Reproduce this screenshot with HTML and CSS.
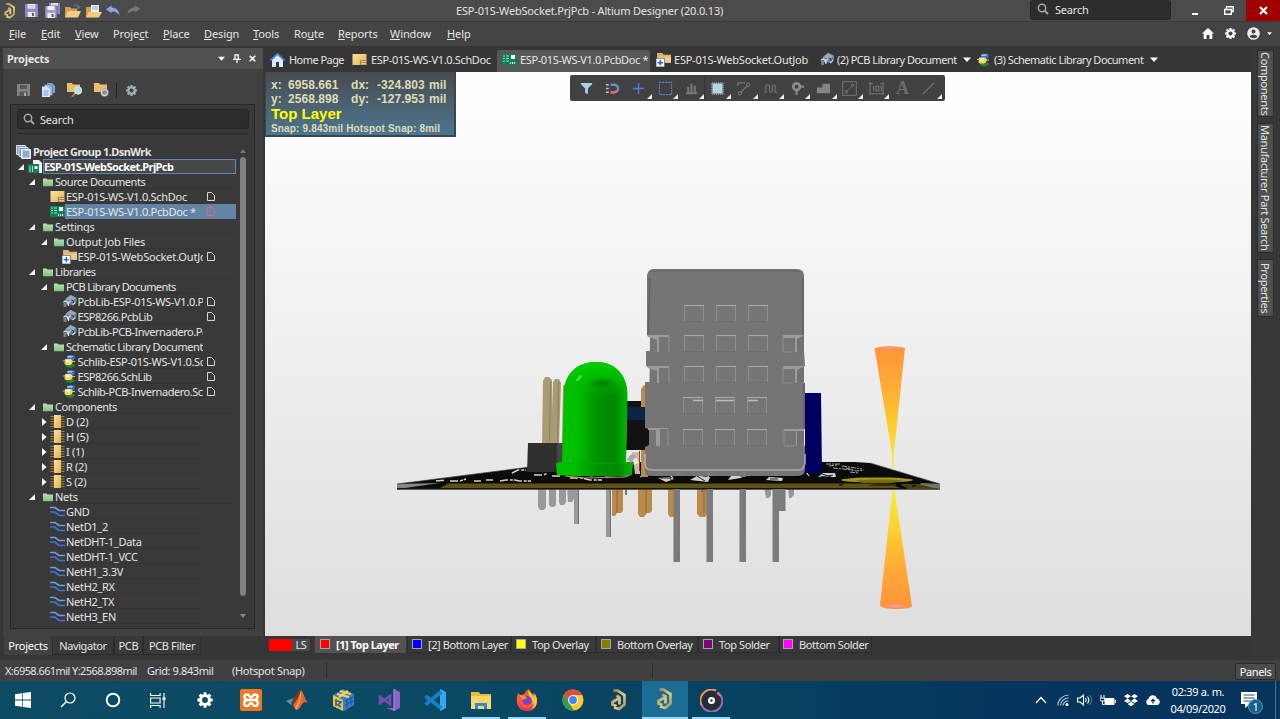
FILE: index.html
```
<!DOCTYPE html>
<html lang="en">
<head>
<meta charset="utf-8">
<title>ESP-01S-WebSocket.PrjPcb - Altium Designer (20.0.13)</title>
<link rel="stylesheet" href="styles.css">
</head>
<body>
<svg class="sprite" aria-hidden="true">
  <defs>
    <linearGradient id="gFolder" x1="0" y1="0" x2="0" y2="1"><stop offset="0" stop-color="#b9e3b4"/><stop offset="1" stop-color="#82c17f"/></linearGradient>
    <linearGradient id="gGold" x1="0" y1="0" x2="1" y2="1"><stop offset="0" stop-color="#fbe3a3"/><stop offset="1" stop-color="#e2ae55"/></linearGradient>
    <linearGradient id="gAlt" x1="0" y1="0" x2="1" y2="1"><stop offset="0" stop-color="#a88a48"/><stop offset=".6" stop-color="#e0cc8c"/><stop offset="1" stop-color="#a58b4c"/></linearGradient>
  </defs>
  <symbol id="altium" viewBox="0 0 16 22"><path d="M2.500 1.500h4l7 4.500v9.500L8 20l-5-1.500M8.500 15.500V8.500L5.500 6.500M1.500 13l6-3.500M1.500 12v3.500l4 1.500" fill="none" stroke="url(#gAlt)" stroke-width="2.700"/></symbol>
  <symbol id="save" viewBox="0 0 14 14"><path d="M0 0h14v14H0z" fill="currentColor"/><path d="M3 0h8v5H3z" fill="#f4f4fb"/><path d="M4 1.500h6M4 3.300h6" stroke="#aaa" stroke-width=".8"/><path d="M3 8.500h8V14H3z" fill="#e9e9f4"/><path d="M7.500 9.500h2V13h-2z" fill="#555"/></symbol>
  <symbol id="saveall" viewBox="0 0 15 15"><path d="M4 0h11v11H4z" fill="#8f87c8"/><path d="M6 0h7v3H6z" fill="#ddd"/><path d="M0 3h12v12H0z" fill="#a29bd5" stroke="#4b4b4b" stroke-width=".6"/><path d="M2.500 3h7v4h-7zM2.500 10h7v5h-7z" fill="#f1f1f9"/><path d="M6.500 11h2v3h-2z" fill="#555"/></symbol>
  <symbol id="open" viewBox="0 0 16 14"><path d="M0 3h5l1.500 1.500H12V13H0z" fill="#d49f50"/><path d="M3 7h13l-3 6.500H0z" fill="#f4cd83"/><path d="M9 2c2-2 4-1 4 1l1.500 0-2.500 2.500" fill="none" stroke="#4a7fa0" stroke-width="1.300"/></symbol>
  <symbol id="opendoc" viewBox="0 0 16 14"><path d="M0 3h5l1 1.500h7V13H0z" fill="#d49f50"/><path d="M5 1h8v8H5z" fill="#e8f0fb"/><path d="M6 3h6M6 5h6" stroke="#7fa1cf" stroke-width=".8"/><path d="M3 8h13l-3 5.500H0z" fill="#f4cd83"/></symbol>
  <symbol id="undo" viewBox="0 0 15 12"><path d="M0 4l6-4v2.600c5 0 8 2.500 8.500 8.400-2-3.500-4.500-4.500-8.500-4.500V8.500z" fill="currentColor"/></symbol>
  <symbol id="arrow-open" viewBox="0 0 6 6"><path d="M6 0v6H0z" fill="#f4f4f4"/></symbol>
  <symbol id="arrow-shut" viewBox="0 0 6 8"><path d="M1 0l4.500 4L1 8z" fill="#fff"/></symbol>
  <symbol id="folder" viewBox="0 0 14 12"><path d="M0 1h5l1 1.500h8V12H0z" fill="url(#gFolder)"/></symbol>
  <symbol id="sch" viewBox="0 0 14 11"><path d="M0 0h14v11H0z" fill="url(#gGold)"/><path d="M8 6.500h6V11H8zM8 8.500h6" fill="#e9c987" stroke="#8f7442" stroke-width=".8"/></symbol>
  <symbol id="pcb" viewBox="0 0 15 11"><path d="M0 0h15v11H0z" fill="#0e8154"/><path d="M1 2h2M1 4.500h2M1 7h2M4 2h3M4 4.500h3M4 7h3" stroke="#9ce0c2" stroke-width="1"/><path d="M9 1h4v4H9z" fill="#fff"/><path d="M8 9h6" stroke="#fff" stroke-width="2" stroke-dasharray="1 1"/></symbol>
  <symbol id="prj" viewBox="0 0 15 14"><path d="M5 0h6l3 3v10H5z" fill="#f2f6f2"/><path d="M0 4h11v9H0z" fill="#0e8154"/><path d="M2 6v6M4.500 6v6" stroke="#9ce0c2" stroke-width="1"/><path d="M6.500 6h3v3h-3z" fill="#fff"/></symbol>
  <symbol id="group" viewBox="0 0 15 14"><path d="M.5.500h9v9h-9z" fill="#7d9fcf" stroke="#dbe7f8"/><path d="M3 2.500h9v9H3z" fill="#6f93ca" stroke="#dbe7f8"/><path d="M5.500 4.500h9v9h-9z" fill="#bcd0ee" stroke="#f4f8ff"/><path d="M7 7h6M7 9h6M7 11h6" stroke="#5b7fb5" stroke-width=".9"/></symbol>
  <symbol id="outjob" viewBox="0 0 14 13"><path d="M1 0h5l1 1.500h7V9H1z" fill="#e6b36b"/><path d="M2 3.500h12V9H2z" fill="#f5cb8c"/><path d="M0 5h8v8H0z" fill="#fff" stroke="#2d63b8" stroke-width=".7"/><path d="M4 6.500v5M1.500 9h5" stroke="#2561c8" stroke-width="1.300"/></symbol>
  <symbol id="pcblib" viewBox="0 0 14 13"><path d="M3 4l5-4 6 3v4l-5 3-6-2z" fill="#6d8299"/><path d="M3 4l5-4 6 3-5 3z" fill="#93a9be"/><path d="M1 7.500c2-3 5-1 4 2M6 11V7.500L8 6M10 10l3-2.500" fill="none" stroke="#d7dee4" stroke-width="1.300"/><path d="M1 8h3v4H1z" fill="#79848e"/><path d="M9 5l2 1v2" fill="none" stroke="#2f3d4a"/></symbol>
  <symbol id="schlib" viewBox="0 0 13 13"><path d="M4 1q4-2 8 0l-1 4H4z" fill="#2f74d0"/><path d="M5 1h5l-1 1.500H4z" fill="#a4cbf7"/><path d="M3 9h8l1 2-4 2-5-1z" fill="#268330"/><path d="M2 4h6l2 2-1 3-2 1H3L1.500 9z" fill="#f6d46c"/><path d="M3 5h4v2H3z" fill="#fff2bd"/><path d="M0 6h2M9 6.500h3" stroke="#e5c052"/></symbol>
  <symbol id="chip" viewBox="0 0 14 13"><path d="M0 1.500h14M0 4h14M0 6.500h14M0 9h14M0 11.500h14" stroke="#9b8434" stroke-width="1"/><path d="M3.500 0h7v13h-7z" fill="url(#gGold)"/></symbol>
  <symbol id="net" viewBox="0 0 15 11"><path d="M0 1.500h5l4 3h6" fill="none" stroke="#6f9be4" stroke-width="1.700"/><path d="M0 6h5l4 3.500h6" fill="none" stroke="#3f73dc" stroke-width="1.700"/></symbol>
  <symbol id="doc" viewBox="0 0 8 9"><path d="M.5.500h4l3 3v5h-7z" fill="none" stroke="currentColor"/></symbol>
  <symbol id="gear" viewBox="0 0 16 16"><path d="M8 1.200v13.600M1.200 8h13.600M3.200 3.200l9.600 9.600M12.800 3.200l-9.600 9.600" stroke="currentColor" stroke-width="2.600"/><circle cx="8" cy="8" r="4" fill="none" stroke="currentColor" stroke-width="2.600"/><circle cx="8" cy="8" r="2.600" fill="var(--hole,#404040)"/></symbol>
  <symbol id="lens" viewBox="0 0 12 12"><circle cx="5" cy="5" r="3.700" fill="none" stroke="currentColor" stroke-width="1.500"/><path d="M7.800 7.800L11 11" stroke="currentColor" stroke-width="2"/></symbol>
  <symbol id="caret" viewBox="0 0 8 5"><path d="M0 .500h8L4 5z" fill="#fff"/></symbol>
</svg>

<header class="titlebar">
  <div class="quick">
    <svg class="q-alt"><use href="#altium"/></svg>
    <svg class="q-save"><use href="#save"/></svg>
    <svg class="q-all"><use href="#saveall"/></svg>
    <svg class="q-open"><use href="#open"/></svg>
    <svg class="q-open"><use href="#opendoc"/></svg>
    <svg class="q-undo"><use href="#undo"/></svg>
    <svg class="q-redo"><use href="#undo"/></svg>
  </div>
  <div class="title">ESP-01S-WebSocket.PrjPcb - Altium Designer (20.0.13)</div>
  <div class="win-tools">
    <div class="top-search"><svg class="lens"><use href="#lens"/></svg><span>Search</span></div>
    <div class="win-btn"><svg width="8" height="10" viewBox="0 0 8 10"><path d="M1 8h6" stroke="#fff" stroke-width="2"/></svg></div>
    <div class="win-btn"><svg width="10" height="9" viewBox="0 0 10 9"><path d="M2.500 3V.8h6.700v4.700H7.500M.7 3.500h6.600v4.800H.7z" fill="none" stroke="#fff" stroke-width="1.400"/></svg></div>
    <div class="win-btn close"><svg width="9" height="9" viewBox="0 0 9 9"><path d="M1 1l7 7M8 1L1 8" stroke="#fff" stroke-width="2.200"/></svg></div>
  </div>
</header>

<nav class="menubar">
  <span class="m1"><u>F</u>ile</span><span class="m2"><u>E</u>dit</span><span class="m3"><u>V</u>iew</span><span class="m4">Proje<u>c</u>t</span><span class="m5"><u>P</u>lace</span><span class="m6"><u>D</u>esign</span><span class="m7"><u>T</u>ools</span><span class="m8">Ro<u>u</u>te</span><span class="m9"><u>R</u>eports</span><span class="m10"><u>W</u>indow</span><span><u>H</u>elp</span>
  <div class="menu-icons">
    <svg width="12" height="11" viewBox="0 0 12 11"><path d="M6 0l6 5.500h-1.700V11H7.500V7h-3v4H1.700V5.500H0z" fill="#fff"/></svg>
    <svg class="g12"><use href="#gear"/></svg>
    <svg width="13" height="13" viewBox="0 0 13 13"><circle cx="6.500" cy="6.500" r="6.300" fill="#eee"/><circle cx="6.500" cy="4.500" r="2" fill="#444"/><path d="M2.500 9.500c1.500-2.500 6.500-2.500 8 0-2 2.300-6 2.300-8 0z" fill="#444"/></svg>
    <svg class="tiny"><use href="#caret"/></svg>
  </div>
</nav>

<div class="workspace">
  <aside class="side">
    <div class="panel">
      <div class="panel-head"><b>Projects</b>
        <svg class="ph-caret"><use href="#caret"/></svg>
        <svg width="8" height="9" viewBox="0 0 8 9"><path d="M1.500.8h4.500M2 .5v4.500M5.200.5v4.500M0 5.300h8M4 5.500V9" stroke="#fff" stroke-width="1.300" fill="none"/></svg>
        <svg width="7" height="7" viewBox="0 0 7 7"><path d="M.7.700l5.600 5.600M6.300.700L.7 6.300" stroke="#fff" stroke-width="1.600"/></svg>
      </div>
      <div class="panel-tools">
        <svg class="t-save" width="13" height="12" viewBox="0 0 13 12"><path d="M0 0h13v12H0z" fill="#858585"/><path d="M3 1h7v4H3zM2.500 7.500h8V12h-8z" fill="#575757"/><path d="M7 8.500h2V12H7z" fill="#aaa"/></svg>
        <svg class="t-docs" width="13" height="14" viewBox="0 0 13 14"><path d="M5 0h5l3 3v7H5z" fill="#7ea4d5"/><path d="M2.500 1.500h5l3 3v8h-8z" fill="#9cbce5" stroke="#40618d" stroke-width=".6"/><path d="M0 3.500h5l3 3V14H0z" fill="#d6e6fa"/><path d="M1.500 8h5M1.500 10h5M1.500 12h5" stroke="#6d93c5" stroke-width=".8"/></svg>
        <svg class="t-fold" width="15" height="14" viewBox="0 0 15 14"><path d="M0 0h5l1 1.500h7V9H0z" fill="#ecbd6c"/><path d="M9 9l-4 5" stroke="#a58752" stroke-width="1.800"/><circle cx="11" cy="7.500" r="3.700" fill="#b9dbea" stroke="#dce8ec"/></svg>
        <svg class="t-fold2" width="15" height="14" viewBox="0 0 15 14"><path d="M0 0h5l1 1.500h7V9H0z" fill="#ecbd6c"/><circle cx="10.500" cy="9.500" r="4.200" fill="#8b8b8b"/><circle cx="10.500" cy="9.500" r="3" fill="none" stroke="#d0d0d0" stroke-width="1.300"/></svg>
        <i></i>
        <svg class="t-gear"><use href="#gear"/></svg>
      </div>
      <div class="tree-box">
        <div class="tree-search"><svg class="lens"><use href="#lens"/></svg><span>Search</span></div>
        <div class="tree-wrap">
          <div class="tree">
            <div class="row l0 bold"><svg class="ic"><use href="#group"/></svg><span>Project Group 1.DsnWrk</span></div>
            <div class="row l1 bold current"><svg class="ar"><use href="#arrow-open"/></svg><svg class="ic"><use href="#prj"/></svg><span>ESP-01S-WebSocket.PrjPcb</span></div>
            <div class="row l2 tight"><svg class="ar"><use href="#arrow-open"/></svg><svg class="ic f"><use href="#folder"/></svg><span>Source Documents</span></div>
            <div class="row l3"><svg class="ar"></svg><svg class="ic s"><use href="#sch"/></svg><span>ESP-01S-WS-V1.0.SchDoc</span><svg class="dc"><use href="#doc"/></svg></div>
            <div class="row l3 selected"><svg class="ar"></svg><svg class="ic s"><use href="#pcb"/></svg><span>ESP-01S-WS-V1.0.PcbDoc *</span><svg class="dc"><use href="#doc"/></svg></div>
            <div class="row l2"><svg class="ar"><use href="#arrow-open"/></svg><svg class="ic f"><use href="#folder"/></svg><span>Settings</span></div>
            <div class="row l3 loose"><svg class="ar"><use href="#arrow-open"/></svg><svg class="ic f"><use href="#folder"/></svg><span>Output Job Files</span></div>
            <div class="row l4 loose"><svg class="ar"></svg><svg class="ic"><use href="#outjob"/></svg><span>ESP-01S-WebSocket.OutJob</span><svg class="dc"><use href="#doc"/></svg></div>
            <div class="row l2 tight"><svg class="ar"><use href="#arrow-open"/></svg><svg class="ic f"><use href="#folder"/></svg><span>Libraries</span></div>
            <div class="row l3 tighter"><svg class="ar"><use href="#arrow-open"/></svg><svg class="ic f"><use href="#folder"/></svg><span>PCB Library Documents</span></div>
            <div class="row l4"><svg class="ar"></svg><svg class="ic n"><use href="#pcblib"/></svg><span>PcbLib-ESP-01S-WS-V1.0.PcbLib</span><svg class="dc"><use href="#doc"/></svg></div>
            <div class="row l4 tight"><svg class="ar"></svg><svg class="ic n"><use href="#pcblib"/></svg><span>ESP8266.PcbLib</span><svg class="dc"><use href="#doc"/></svg></div>
            <div class="row l4 tight"><svg class="ar"></svg><svg class="ic n"><use href="#pcblib"/></svg><span>PcbLib-PCB-Invernadero.PcbLib</span></div>
            <div class="row l3 tight"><svg class="ar"><use href="#arrow-open"/></svg><svg class="ic f"><use href="#folder"/></svg><span>Schematic Library Document</span></div>
            <div class="row l4"><svg class="ar"></svg><svg class="ic n"><use href="#schlib"/></svg><span>Schlib-ESP-01S-WS-V1.0.SchLib</span><svg class="dc"><use href="#doc"/></svg></div>
            <div class="row l4 tight"><svg class="ar"></svg><svg class="ic n"><use href="#schlib"/></svg><span>ESP8266.SchLib</span><svg class="dc"><use href="#doc"/></svg></div>
            <div class="row l4 tight"><svg class="ar"></svg><svg class="ic n"><use href="#schlib"/></svg><span>Schlib-PCB-Invernadero.SchLib</span><svg class="dc"><use href="#doc"/></svg></div>
            <div class="row l2 tight"><svg class="ar"><use href="#arrow-open"/></svg><svg class="ic f"><use href="#folder"/></svg><span>Components</span></div>
            <div class="row l3"><svg class="ar sh"><use href="#arrow-shut"/></svg><svg class="ic n"><use href="#chip"/></svg><span>D (2)</span></div>
            <div class="row l3"><svg class="ar sh"><use href="#arrow-shut"/></svg><svg class="ic n"><use href="#chip"/></svg><span>H (5)</span></div>
            <div class="row l3"><svg class="ar sh"><use href="#arrow-shut"/></svg><svg class="ic n"><use href="#chip"/></svg><span>I (1)</span></div>
            <div class="row l3"><svg class="ar sh"><use href="#arrow-shut"/></svg><svg class="ic n"><use href="#chip"/></svg><span>R (2)</span></div>
            <div class="row l3"><svg class="ar sh"><use href="#arrow-shut"/></svg><svg class="ic n"><use href="#chip"/></svg><span>S (2)</span></div>
            <div class="row l2"><svg class="ar"><use href="#arrow-open"/></svg><svg class="ic f"><use href="#folder"/></svg><span>Nets</span></div>
            <div class="row l3"><svg class="ar"></svg><svg class="ic s"><use href="#net"/></svg><span>GND</span></div>
            <div class="row l3"><svg class="ar"></svg><svg class="ic s"><use href="#net"/></svg><span>NetD1_2</span></div>
            <div class="row l3"><svg class="ar"></svg><svg class="ic s"><use href="#net"/></svg><span>NetDHT-1_Data</span></div>
            <div class="row l3"><svg class="ar"></svg><svg class="ic s"><use href="#net"/></svg><span>NetDHT-1_VCC</span></div>
            <div class="row l3"><svg class="ar"></svg><svg class="ic s"><use href="#net"/></svg><span>NetH1_3.3V</span></div>
            <div class="row l3"><svg class="ar"></svg><svg class="ic s"><use href="#net"/></svg><span>NetH2_RX</span></div>
            <div class="row l3"><svg class="ar"></svg><svg class="ic s"><use href="#net"/></svg><span>NetH2_TX</span></div>
            <div class="row l3"><svg class="ar"></svg><svg class="ic s"><use href="#net"/></svg><span>NetH3_EN</span></div>
          </div>
          <div class="scroll"><svg width="6" height="4" viewBox="0 0 6 4"><path d="M3 0l3 4H0z" fill="#777"/></svg><div class="thumb"></div><svg width="6" height="4" viewBox="0 0 6 4"><path d="M0 0h6L3 4z" fill="#888"/></svg></div>
        </div>
      </div>
    </div>
    <div class="panel-tabs"><span class="on pt1">Projects</span><span class="pt2">Navigator</span><span class="pt3">PCB</span><span class="pt4">PCB Filter</span></div>
  </aside>

  <main class="editor">
    <div class="doc-tabs">
      <div class="dt d1"><svg width="15" height="14" viewBox="0 0 15 14"><path d="M7.500 0L15 7h-2v7H9V9H6v5H2V7H0z" fill="#6fb1f5"/><path d="M7.500 2L13 7.300V14H9V9H6v5H2V7.300z" fill="#d8ecff"/><path d="M7.500 0L15 7l-1 1-6.500-6L1 8 0 7z" fill="#3f86dc"/></svg><span>Home Page</span></div>
      <div class="dt d2"><svg width="15" height="11"><use href="#sch"/></svg><span>ESP-01S-WS-V1.0.SchDoc</span></div>
      <div class="dt d3 on"><svg width="15" height="11"><use href="#pcb"/></svg><span>ESP-01S-WS-V1.0.PcbDoc *</span></div>
      <div class="dt d4"><svg width="15" height="14"><use href="#outjob"/></svg><span>ESP-01S-WebSocket.OutJob</span></div>
      <div class="dt d5"><svg width="14" height="13"><use href="#pcblib"/></svg><span>(2) PCB Library Document</span><svg class="dd"><use href="#caret"/></svg></div>
      <div class="dt d6"><svg width="13" height="14"><use href="#schlib"/></svg><span>(3) Schematic Library Document</span><svg class="dd"><use href="#caret"/></svg></div>
    </div>
    <div class="viewport">
      <svg class="scene" viewBox="265 72 986 563">
        <defs>
          <linearGradient id="led" x1="0" x2="1"><stop offset="0" stop-color="#00c400"/><stop offset=".25" stop-color="#00bd00"/><stop offset=".55" stop-color="#009100"/><stop offset=".8" stop-color="#008800"/><stop offset="1" stop-color="#00b600"/></linearGradient>
          <linearGradient id="dome" x1="0" y1="0" x2="0" y2="1"><stop offset="0" stop-color="#00d000"/><stop offset=".55" stop-color="#00c400" stop-opacity=".7"/><stop offset="1" stop-color="#00b000" stop-opacity="0"/></linearGradient>
          <linearGradient id="coneT" x1="0" y1="0" x2="0" y2="1"><stop offset="0" stop-color="#ff943a"/><stop offset=".35" stop-color="#fdae35"/><stop offset=".7" stop-color="#fcd32e"/><stop offset="1" stop-color="#f7ee3a"/></linearGradient>
          <linearGradient id="coneB" x1="0" y1="1" x2="0" y2="0"><stop offset="0" stop-color="#ff923c"/><stop offset=".35" stop-color="#fdab36"/><stop offset=".7" stop-color="#fcd32e"/><stop offset="1" stop-color="#f7ee3a"/></linearGradient>
          <radialGradient id="pink"><stop offset="0" stop-color="#f49aa8"/><stop offset="1" stop-color="#fb9449"/></radialGradient>
          <radialGradient id="shade"><stop offset="0" stop-color="#007400"/><stop offset="1" stop-color="#008800" stop-opacity="0"/></radialGradient>
          <g id="win"><path d="M0 0h20v17H0z" fill="#767676"/><path d="M.5 16V1M19.500 1v15" stroke="#8f8f8f"/><path d="M0 .5h20" stroke="#a6a6a6" stroke-width="1.200"/><path d="M0 16.500h20" stroke="#6b6b6b" stroke-width=".7"/></g>
        </defs>
        <!-- leads under the board -->
        <g fill="#999">
          <path d="M538 487h8v20l-2 3h-4l-2-3zM549 487h7v18l-2 2h-3l-2-2zM559 487h7v15l-2 3h-4l-1-3zM567 487h7v12l-2 3h-4zM574 487h5v37h-5zM606 487h5v50h-5z"/>
          <path d="M578 487h1v37h-1zM610 487h1v50h-1z" fill="#6f6f6f"/>
          <path d="M764 487h7v8l-2 3h-3zM788 487h6v8l-3 3h-2z"/>
        </g>
        <path d="M612 487h5v26l-2 3h-3zM617 487h6v24l-2 2h-4zM638 487h8v27l-2 3h-4l-2-3zM646 487h6v24l-2 2h-4zM668 487h8v27l-2 3h-4l-2-3zM697 487h10v27l-2 3h-5l-3-3z" fill="#b88a4c"/>
        <path d="M617 489v24M646 489v25M704 489v24" stroke="#8c6734"/>
        <path d="M625 487h2v8h-2zM701 487h2v5h-2z" fill="#777799"/>
        <!-- board -->
        <path d="M397 484l133-17 40-5h285l15 1 70 21v5H397z" fill="#0b0b09"/>
        <path d="M440 488l8-4.500h440l12 4.500z" fill="#5f5314"/>
        <path d="M397 484l43-1-35 5h-8z" fill="#858585"/>
        <path d="M940 484l-18-1-6 3 24 3z" fill="#737373"/><path d="M900 484l18 0 20 5h-30z" fill="#4a4110"/>
        <path d="M397 489.300h543" stroke="#383838" stroke-width="1"/>
        <path d="M397 484l133-17M870 463l70 21" stroke="#444" stroke-width=".7"/>
        <g stroke="#d2d2d2" fill="none">
          <path d="M436 481l10-1M450 481h10l6-2M474 481h7M486 480h7M500 481l6-1h9l4 1h12M512 473l6-3h8M534 475h10l3-2M552 476h10M570 478h12l8 2h12" stroke-width="1.500" stroke-dasharray="8 2 3 1"/>
          <path d="M590 476l10-1M605 476l23-1M640 477l9-4 5-1M656 475h14l3 3M694 479l8-3M706 481l3-6M806 472l3 4" stroke-width="1.200"/>
        </g>
        <path d="M658 478l11-1 5 2-8 3zM690 480l7-4 13 1-2 5zM728 480l3-4 14-1-4 3zM766 480l3-3 14 1-1 3zM818 477l5-4 12 0 1 4z" fill="#d0d0d0"/>
        <path d="M660 478h10l2 3M697 476l8 5M770 479h8M822 474l12 4M820 477l13-2" stroke="#222" stroke-width="1" fill="none"/>
        <path d="M662 474h18M696 475h17M728 475h16M775 475h18" stroke="#897722" stroke-width="1.200"/>
        <path d="M826 464h15M829 466l8-1M833 468l20 2M846 468l10 3 8-1M850 472l8 1M842 466l20 3" stroke="#a8a8a8" stroke-width="1" stroke-dasharray="5 1 2 1"/>
        <ellipse cx="877" cy="480" rx="36" ry="2.600" fill="#a8961e"/><ellipse cx="879" cy="481" rx="24" ry="1.600" fill="#7d6c0c"/>
        <ellipse cx="841" cy="485" rx="2" ry="1" fill="#171500"/><ellipse cx="914" cy="486" rx="2" ry="1" fill="#171500"/>
        <path d="M874 484h22v2h-28z" fill="#352e09"/>
        <!-- pin header -->
        <path d="M543 381l2-4h4l3 3v64h-10zM553 382l2-3h4l2 4-2 61h-8z" fill="#a99b74"/>
        <path d="M550.500 382l-1 61M558.500 382l-1 61" stroke="#8d805c" stroke-width="1"/>
        <path d="M563 386l2-2v60h-3z" fill="#b58a63"/>
        <path d="M528 443h38v29h-39z" fill="#303030"/><path d="M557 443h10v18l-10 11z" fill="#464646"/>
        <!-- parts behind the sensor -->
        <path d="M641 389l3-4h4v92h-7z" fill="#b98b4e"/>
        <path d="M627 401h14v6h8v43h-23z" fill="#111"/><path d="M627 407h21v13h-21z" fill="#0b2547"/>
        <path d="M632 452h8v22h-5z" fill="#c5bba8"/><path d="M627 460c4-9 8-5 9-3l-4 6z" fill="#aaa"/><path d="M633 459l4-1 2 5-5 2z" fill="#ece4d8"/><path d="M639 451h1v20h-1z" fill="#923a2e"/>
        <path d="M805 393h16l1 80h-67l2-5h48z" fill="#000063"/><path d="M754 474v-3h4v3z" fill="#d1d1d1"/>
        <!-- LED -->
        <path d="M564 393c0-19 13-31 32-31s31 13 31.500 31L626 464h-64z" fill="url(#led)"/>
        <path d="M564 394c0-20 13-32 32-32s31 13 31.500 32c-15 3-48 3-63.500 0z" fill="url(#dome)"/>
        <ellipse cx="602" cy="383" rx="16" ry="6" fill="url(#shade)"/>
        <ellipse cx="579" cy="378" rx="4" ry="1.600" transform="rotate(-50 579 378)" fill="#52e052" opacity=".8"/>
        <path d="M556 463l4-1h70l3 1-1 12-12 1h-45l-18-1z" fill="url(#led)"/>
        <path d="M557 463h75" stroke="#00ad00" stroke-width="1"/>
        <path d="M565 476l20 2 40-1 5-2" stroke="#b0a46b" stroke-width="1" fill="none"/>
        <!-- sensor -->
        <path d="M650 330h154v120H649z" fill="#717171"/>
        <path d="M653 269h144q7 0 7 7l0 60-7 1v14h7l1 15-8 2v14l8 1v46h-8v16l8 1v23q0 7-7 7H651q-7 0-6-7v-22l4-2v-16l-4-1v-46h6v-14l-5-2v-15h4v-14l-3-2v-59q1-7 6-7z" fill="#757575"/>
        <path d="M651 271h148" stroke="#686868" stroke-width="1.500"/><path d="M650 278l-2 57M803 278v57M804 384v44" stroke="#606060" stroke-width="1.400" fill="none"/>
        <path d="M645 454v9q0 7 7 7h146q6 0 7-7v-9" stroke="#aaa" fill="none" stroke-width="1.600"/>
        <g fill="#9b9b9b">
          <path d="M647 335h22v2h-10v15h-2v-12l-9-3zM647 366h22v2h-10v15h-2v-12l-9-3zM648 428h20v1h-8v17h-4v-16h-8z"/>
          <path d="M783 335h22l-8 4v13h-2v-14h-12zM783 366h22l-8 4v13h-2v-14h-12zM784 429h20v2h-7v15h-1v-15h-12z"/>
        </g>
        <path d="M669 337v15M669 368v15M668 430v16M783 337v15h10M783 368v15h10M784 430v16h10" stroke="#929292" fill="none"/>
        <use href="#win" x="684" y="305"/><use href="#win" x="716" y="305"/><use href="#win" x="748" y="305"/>
        <use href="#win" x="684" y="335"/><use href="#win" x="716" y="335"/><use href="#win" x="748" y="335"/>
        <use href="#win" x="684" y="366"/><use href="#win" x="716" y="366"/><use href="#win" x="748" y="366"/>
        <use href="#win" x="683" y="397"/><use href="#win" x="715" y="397"/><use href="#win" x="747" y="397"/>
        <use href="#win" x="683" y="429"/><use href="#win" x="715" y="429"/><use href="#win" x="747" y="429"/>
        <path d="M693 400.500h10M716 400.500h18M748 400.500h10" stroke="#bbb" stroke-width="1.500"/>
        <g fill="#7b7b7b"><path d="M673.500 489h6.500v73h-6.500zM706.500 489h6.500v73h-6.500zM739.500 489h6.500v73h-6.500zM772.500 489h13v22h-6.500v51h-6.500zM675 472h6v4h-6zM707 472h6v4h-6zM740 472h6v5h-6zM772 472h7v4h-7z"/></g>
        <!-- axis cones -->
        <path d="M874.500 348q15-3 30.500 0l-11 104-.5 18h-1l-.8-18z" fill="url(#coneT)"/>
        <ellipse cx="890" cy="348" rx="13" ry="1.800" fill="url(#pink)"/>
        <path d="M892.500 490h2l17.500 116q-1 3-14 3-17 0-18-4z" fill="url(#coneB)"/>
        <ellipse cx="896" cy="606" rx="12" ry="2.500" fill="url(#pink)"/>
      </svg>
      <div class="hud">
        <div class="coords"><span>x:</span><span>6958.661</span><span>dx:</span><span>-324.803</span><span>mil</span></div>
        <div class="coords"><span>y:</span><span>2568.898</span><span>dy:</span><span>-127.953</span><span>mil</span></div>
        <div class="layer-name">Top Layer</div>
        <div class="snap">Snap: 9.843mil Hotspot Snap: 8mil</div>
      </div>
      <div class="active-bar">
        <div><svg viewBox="0 0 16 16"><path d="M2 2h12v1.500L9.500 8v6l-3-1.500V8L2 3.500z" fill="#a9cfdf"/></svg></div>
        <div><svg viewBox="0 0 16 16"><path d="M6 4h4a4 4 0 010 8H6" fill="none" stroke="#6a8fc7" stroke-width="2.600"/><path d="M6 12h4a4 4 0 003-1.500" fill="none" stroke="#d96b74" stroke-width="2.600"/><path d="M1 4h3M1 8h3M1 12h3" stroke="#b8c7ce" stroke-width="1.800"/></svg></div>
        <div class="more"><svg viewBox="0 0 16 16"><path d="M8 2v12M2 8h12" stroke="#4d7fe0" stroke-width="1.500"/></svg></div>
        <div class="more"><svg viewBox="0 0 16 16"><path d="M1.500 1.500h13v13h-13z" fill="none" stroke="#5582e6" stroke-width="1.200" stroke-dasharray="2 1"/></svg></div>
        <div class="more sep"><svg viewBox="0 0 16 16"><path d="M2 13h12M4.500 6v6M8 3v9M11.500 5v7" stroke="#777" stroke-width="2.200"/></svg></div>
        <div class="more"><svg viewBox="0 0 16 16"><path d="M3 1v14M5 1v14M7 1v14M9 1v14M11 1v14M13 1v14M1 3h14M1 5h14M1 7h14M1 9h14M1 11h14M1 13h14" stroke="#8fabb5" stroke-width=".9"/><path d="M3 3h10v10H3z" fill="#b4d6e2"/></svg></div>
        <div class="more"><svg viewBox="0 0 16 16"><path d="M4 12l7-7M1 5V2h8" fill="none" stroke="#747474" stroke-width="1.400"/><circle cx="3" cy="13" r="1.800" fill="none" stroke="#808080"/><circle cx="12" cy="4" r="1.800" fill="none" stroke="#808080"/></svg></div>
        <div class="more"><svg viewBox="0 0 16 16"><path d="M1 12h2V6q0-2 2-2t2 2v4q0 2 1.500 2T10 10V6q0-2 1.500-2T13 6v6h2" fill="none" stroke="#747474" stroke-width="1.300"/></svg></div>
        <div class="more"><svg viewBox="0 0 16 16"><circle cx="7" cy="6" r="3.500" fill="none" stroke="#8a8a8a" stroke-width="3"/><path d="M7 9v6M10 6h5" stroke="#8a8a8a" stroke-width="2.200"/></svg></div>
        <div class="more"><svg viewBox="0 0 16 16"><path d="M1 7h6V3h8v10H1z" fill="#858585"/></svg></div>
        <div class="more"><svg viewBox="0 0 16 16"><path d="M.7.700h14.600v14.600H.7z" fill="none" stroke="#777"/><path d="M5 11l6-6" stroke="#777"/><circle cx="4.500" cy="11.500" r="1.300" fill="none" stroke="#777"/><circle cx="11.500" cy="4.500" r="1.300" fill="none" stroke="#777"/></svg></div>
        <div class="more"><svg viewBox="0 0 16 16"><path d="M1 1v14M15 1v14M1 13.500h14M5 5v6M7.500 5.500h3v5h-3zM13 5v6M1 3h3M12 3h3" fill="none" stroke="#777" stroke-width="1.100"/></svg></div>
        <div class="letter">A</div>
        <div class="more"><svg viewBox="0 0 16 16"><path d="M2 14L14 2" stroke="#787878" stroke-width="1.300"/></svg></div>
      </div>
    </div>
    <div class="layer-tabs">
      <div class="ls"><i></i><span>LS</span></div>
      <div class="lt a on"><i class="c1"></i><span>[1] Top Layer</span></div>
      <div class="lt b"><i class="c2"></i><span>[2] Bottom Layer</span></div>
      <div class="lt c"><i class="c3"></i><span>Top Overlay</span></div>
      <div class="lt d"><i class="c4"></i><span>Bottom Overlay</span></div>
      <div class="lt e"><i class="c5"></i><span>Top Solder</span></div>
      <div class="lt f"><i class="c6"></i><span>Bottom Solder</span></div>
    </div>
  </main>

  <aside class="dock"><span class="k1">Components</span><span class="k2">Manufacturer Part Search</span><span class="k3">Properties</span></aside>
</div>

<footer class="status"><span class="s1">X:6958.661mil Y:2568.898mil</span><span class="s2">Grid: 9.843mil</span><span class="s3">(Hotspot Snap)</span><i class="s4"></i><i></i><b>Panels</b></footer>

<div class="taskbar">
  <div class="tk n"><svg width="16" height="16" viewBox="0 0 16 16"><path d="M0 2.200l7-1v6.400H0zM7.700 1L16 0v7.600H7.700zM0 8.400h7v6.400l-7-1zM7.700 8.400H16V16l-8.300-1z" fill="#fff"/></svg></div>
  <div class="tk n"><svg width="16" height="16" viewBox="0 0 16 16"><circle cx="10" cy="6" r="5" fill="none" stroke="#fff" stroke-width="1.200"/><path d="M6.500 9.500L1 15" stroke="#fff" stroke-width="1.400"/></svg></div>
  <div class="tk n"><svg width="16" height="16" viewBox="0 0 16 16"><circle cx="8" cy="8" r="6.300" fill="none" stroke="#fff" stroke-width="1.900"/></svg></div>
  <div class="tk n"><svg width="16" height="15" viewBox="0 0 16 15"><path d="M.6 0v2.500h9.500V0M.6 5h9.500v5H.6zM.6 15v-2.500h9.500V15M14 0v15" fill="none" stroke="#fff" stroke-width="1.100"/><path d="M12.500 4.500h3v2.500h-3z" fill="#fff"/></svg></div>
  <div class="tk gear-slot"><svg class="g17"><use href="#gear"/></svg></div>
  <div class="tk"><svg width="22" height="22" viewBox="0 0 22 22"><rect width="22" height="22" rx="2" fill="#f0771f"/><path d="M8 11h6M8 11c-5 0-4-6-1-5.500 3 0 2 3 4 3s1-3 4-3c4 0 3 5.500-1 5.500 5 0 5 6 1 6-3 0-2-3-4-3s-1 3-4 3c-4 0-4-6 1-6z" fill="none" stroke="#fff" stroke-width="2.500"/></svg></div>
  <div class="tk"><svg width="22" height="20" viewBox="0 0 22 20"><path d="M0 11l7-3 3 3-5 4z" fill="#4c93bd"/><path d="M7 8c4-1 5-8 8-8l-5 14-5 1z" fill="#7c352c"/><path d="M15 0c2 1 4 10 7 13-3-2-5-1-7 3-1 2-3 4-5 4l-3-5c4-4 6-9 8-15z" fill="#df672b"/><path d="M15 0c1 8-1 14-5 20l-1-3c4-4 5-10 6-17z" fill="#f9a945"/></svg></div>
  <div class="tk"><svg width="21" height="22" viewBox="0 0 21 22"><path d="M0 6l10-6 11 5v11l-10 6L0 17z" fill="#397cc9"/><path d="M0 6l10 5v11L0 17z" fill="#f2c233"/><path d="M4 5l12 3M7 2l11 3M15 2l-9 6" stroke="#f5d64a" stroke-width="2.300" fill="none"/><path d="M3 10v7M4 12l4 1-3 3 3 2" stroke="#2360ad" stroke-width="1.600" fill="none"/><path d="M12 12l8-4M12 16l8-4M14 11v8M18 9v7" stroke="#164e96"/></svg></div>
  <div class="tk"><svg width="22" height="22" viewBox="0 0 22 22"><path d="M16 0l6 3v16l-6 3-8-3h8z" fill="#8e61ca"/><path d="M2 8v6l10-7v8L2 8z" fill="none" stroke="#744fb0" stroke-width="2.600"/><path d="M16 0v22" stroke="#a782dd" stroke-width="1.200"/></svg></div>
  <div class="tk"><svg width="22" height="22" viewBox="0 0 22 22"><path d="M16 0l6 3v16l-6 3z" fill="#31a9ef"/><path d="M17 3L1.500 15.500M17 19L1.500 7" stroke="#177fc5" stroke-width="3.700"/></svg></div>
  <div class="tk run"><svg width="20" height="17" viewBox="0 0 20 17"><path d="M0 0h8l1 2h11v15H0z" fill="#f2b735"/><path d="M0 4h20v13H0z" fill="#fbd66c"/><path d="M4 17v-6h12v6h-3v-3H7v3z" fill="#318bcf"/></svg></div>
  <div class="tk run"><svg width="22" height="22" viewBox="0 0 22 22"><path d="M2 4l3 3 3-2c2-2 2-4 5-5 1 3 3 3 3 6l2-2c5 6 5 17-7 18C1 21-1 12 2 4z" fill="#ff5936"/><path d="M12 1c2 3 5 3 5 7l2-3c5 9 0 16-8 15 8-3 6-10 2-12z" fill="#ffc433"/><path d="M3 12c2 9 11 9 15 2-1 10-14 11-15-2z" fill="#f32a67"/><circle cx="11" cy="11.500" r="4.700" fill="#7543c5"/><path d="M3 6c3 0 6 0 8 3l-4 2z" fill="#ff8d2c"/></svg></div>
  <div class="tk"><svg width="22" height="22" viewBox="0 0 22 22"><circle cx="11" cy="11" r="10.500" fill="#fcca30"/><path d="M2 5.700A10.500 10.500 0 0120.300 6H11l-4.300 8z" fill="#e04b3c"/><path d="M2 5.700L7 14l5 7.500C2 22-2 12 2 5.700z" fill="#2e9e54"/><circle cx="11" cy="11" r="5" fill="#f5f5f5"/><circle cx="11" cy="11" r="3.900" fill="#4384ef"/></svg></div>
  <div class="tk"><svg class="alt"><use href="#altium"/></svg></div>
  <div class="tk active"><svg class="alt"><use href="#altium"/></svg></div>
  <div class="tk run"><svg width="23" height="23" viewBox="0 0 23 23"><circle cx="11.500" cy="11.500" r="9.500" fill="#292b34"/><path d="M16 1.500A11 11 0 002 17" fill="none" stroke="#f2925f" stroke-width="2"/><path d="M2 17a10.500 10.500 0 0019-10l-3-4" fill="none" stroke="#966bb4" stroke-width="2"/><path d="M17 4l4 3" stroke="#f36e61" stroke-width="2"/><circle cx="11.500" cy="11.500" r="3.500" fill="#fff"/><circle cx="11.500" cy="11.500" r="1.200" fill="#333"/></svg></div>
  <div class="tray">
    <svg width="12" height="8" viewBox="0 0 12 8"><path d="M1 7l5-5.500L11 7" fill="none" stroke="#fff" stroke-width="1.300"/></svg>
    <svg class="wifi" width="12" height="12" viewBox="0 0 12 12"><path d="M.8 11.500A11 11 0 0111.500 1M3.500 11.500a8 8 0 018-7.500M6 11.500A5.500 5.500 0 0111.500 7" fill="none" stroke="#b9c6d2" stroke-width="1.200"/><circle cx="10" cy="10.500" r="1.500" fill="#fff"/></svg>
    <svg width="15" height="12" viewBox="0 0 15 12"><path d="M.6 4h2.500L6.500 1v10L3.100 8H.6zM8.500 4q1.200 2 0 4M10.500 2.500q2.500 3.500 0 7" fill="none" stroke="#fff" stroke-width="1.100"/><path d="M12.500 1q4 5 0 10" fill="none" stroke="#5f7c98"/></svg>
    <svg width="16" height="11" viewBox="0 0 16 11"><path d="M5 3.500h9v6H5z" fill="#fff" stroke="#fff"/><path d="M15.500 5v3" stroke="#fff"/><path d="M1 0v2.500M4 0v2.500M0 3h5v2l-1.500 1h-2L0 5zM2.500 6v3.500h2" fill="none" stroke="#fff"/></svg>
    <svg width="14" height="13" viewBox="0 0 14 13"><path d="M3.500 0L7 2.200 3.500 4.500 0 2.200zM10.500 0L14 2.200l-3.500 2.300L7 2.200zM3.500 4.600L7 6.900 3.500 9.100 0 6.900zM10.500 4.600L14 6.900l-3.500 2.200L7 6.900zM7 7.700l3.500 2.300L7 12.300 3.500 10z" fill="#fff"/></svg>
    <svg width="14" height="10" viewBox="0 0 14 10"><path d="M3 10C0 10-1 5 2.500 4 3-1 10-1 10.800 3.500 15 4 14.500 10 11 10z" fill="#fff"/><path d="M7 8.500v-4M5 6.300l2-2 2 2" stroke="#06375f" stroke-width="1.300" fill="none"/></svg>
  </div>
  <div class="clock"><span>02:39 a. m.</span><span>04/09/2020</span></div>
  <div class="note"><svg width="16" height="16" viewBox="0 0 16 16"><path d="M0 0h16v12H9l-5 4v-4H0z" fill="#fff"/><path d="M2.500 3h11M2.500 6h11M2.500 9h7" stroke="#245078"/></svg><em>1</em></div>
  <i class="peek"></i>
</div>
</body>
</html>
```
FILE: styles.css
```
* { box-sizing: border-box; }
body {
  margin: 0;
  width: 1280px;
  height: 719px;
  overflow: hidden;
  display: flex;
  flex-direction: column;
  background: #363636;
  color: #e4e4e4;
  font: 11px/15px "Noto Sans", "Open Sans", sans-serif;
  letter-spacing: -0.2px;
  white-space: nowrap;
}
svg { display: block; flex: none; }
.sprite { position: absolute; width: 0; height: 0; }
.lens { width: 12px; height: 12px; color: #a5a5a5; }

/* title bar */
.titlebar {
  height: 22px;
  flex: none;
  display: grid;
  grid-template-columns: 456px 1fr 250px;
  background: #4b4b4b;
  border-bottom: 1px solid #3a3a3a;
}
.quick { display: flex; align-items: center; padding: 0 0 1px 4px; }
.q-alt { width: 12px; height: 16px; margin-right: 9px; }
.q-save { width: 13px; height: 13px; margin-right: 7px; color: #9089c8; }
.q-all { width: 15px; height: 15px; margin-right: 5px; }
.q-open { width: 16px; height: 14px; margin-right: 4.500px; }
.q-undo { width: 14px; height: 12px; color: #83abe8; margin-right: 7px; }
.q-redo { width: 13px; height: 11px; color: #777; transform: scaleX(-1); }
.title { line-height: 22px; letter-spacing: -0.18px; }
.win-tools { display: flex; }
.top-search {
  width: 141px;
  height: 20px;
  display: flex;
  align-items: center;
  gap: 6px;
  padding: 0 0 1px 6px;
  background: #2d2d2d;
  border: 1px solid #252525;
  border-top: 0;
  border-radius: 3px;
  margin-right: 7px;
}
.win-btn { width: 34px; height: 21px; display: grid; place-items: center; }
.win-btn.close { background: #a00000; }

/* menu */
.menubar {
  height: 24px;
  flex: none;
  display: flex;
  align-items: center;
  padding: 0 0 2px 9px;
  background: #444;
  letter-spacing: -0.1px;
}
.menubar u { text-underline-offset: 1px; }
.m1 { width: 32px; } .m2 { width: 34px; } .m3 { width: 38px; } .m4 { width: 50px; } .m5 { width: 41px; }
.m6 { width: 49px; } .m7 { width: 41px; } .m8 { width: 44px; } .m9 { width: 52px; } .m10 { width: 57px; }
.menu-icons { margin-left: auto; display: flex; align-items: center; gap: 10px; padding-right: 8px; }
.g12 { width: 13px; height: 13px; color: #fff; --hole: #444; }
.tiny { width: 5px; height: 3px; margin-left: -3px; }

/* workspace */
.workspace { height: 613px; flex: none; display: grid; grid-template-columns: 265px 986px 29px; padding-top: 3px; }
.side { padding-left: 3px; margin-top: -1px; }
.panel { width: 260px; height: 588px; background: #414141; }
.panel-head {
  height: 21px;
  display: flex;
  align-items: center;
  padding: 0 7px 0 4px;
  background: #505050;
}
.panel-head b { margin-right: auto; letter-spacing: -0.25px; }
.panel-head svg + svg { margin-left: 8px; }
.ph-caret { width: 7px; height: 5px; }
.panel-tools { height: 35px; display: flex; align-items: center; padding: 7px 0 0 14px; }
.t-docs { margin-left: 12px; }
.t-fold { margin-left: 12px; }
.t-fold2 { margin-left: 12px; }
.panel-tools i { width: 1px; height: 15px; background: #222; margin: 0 8px 0 7px; }
.t-gear { width: 13px; height: 13px; color: #a4b0b8; }
.tree-box { width: 245px; height: 525px; margin-left: 7px; border: 1px solid #262626; background: #393939; }
.tree-search {
  width: 232px;
  height: 20px;
  margin: 4px 0 0 6px;
  display: flex;
  align-items: center;
  gap: 5px;
  padding-left: 5px;
  background: #2d2d2d;
  border: 1px solid #232323;
  border-radius: 3px;
}
.tree-wrap { display: flex; margin: 4px 0 0 6px; padding-top: 10px; border-top: 1px solid #262626; width: 232px; }
.tree { width: 219px; letter-spacing: -0.3px; }
.row { height: 15px; display: flex; align-items: center; }
.row span { flex: 1; overflow: hidden; line-height: 15px; border-bottom: 1px solid #343434; height: 15px; }
.row.bold { font-weight: bold; letter-spacing: -0.57px; }
.row.tight { letter-spacing: -0.45px; }
.row.tighter { letter-spacing: -0.57px; }
.row.loose { letter-spacing: -0.17px; }
.l1 { padding-left: 1px; }
.l2 { padding-left: 12px; }
.l3 { padding-left: 24px; }
.l4 { padding-left: 35.500px; }
.l3 span, .l4 span { margin-right: 33px; }
.row .dc { width: 8px; height: 9px; margin: 0 21px 0 4px; color: #d6d6d6; }
.row:has(.dc) span { margin-right: 0; }
.ar { width: 6px; height: 6px; margin-right: 3px; }
.l1 .ar, .l2 .ar { margin-right: 4px; }
.ar.sh { height: 8px; }
.ic { width: 15px; height: 14px; margin-right: 1px; }
.l0 .ic { margin-left: -1px; margin-right: 2px; }
.ic.f { width: 13px; height: 12px; margin: 0 2px 0 1px; }
.ic.s { height: 11px; }
.ic.n { height: 13px; }
.current span { border: 1px solid #6487b0; background: #474747; line-height: 13px; color: #fff; margin-left: -1px; }
.selected span { background: #6284a5; border: 0; margin-left: -1px; padding-left: 1px; }
.selected { background: linear-gradient(90deg, transparent 100px, #6284a5 100px); }
.row.selected .dc { color: #ef6464; }
.scroll { width: 8px; margin-left: 3px; display: flex; flex-direction: column; align-items: center; padding-top: 5px; }
.thumb { width: 6px; height: 439px; margin: 4px 0 18px; border-radius: 3px; background: #808080; }

.panel-tabs { display: flex; height: 21px; padding-left: 1px; }
.panel-tabs span { text-align: center; line-height: 20px; border: 1px solid #2b2b2b; border-top: 0; background: #393939; height: 19px; }
.panel-tabs .on { background: #414141; border-color: #414141; color: #fff; }
.pt1 { width: 48px; } .panel-tabs .pt2 { width: 62px; letter-spacing: -0.4px; } .pt3 { width: 29px; } .panel-tabs .pt4 { width: 58px; letter-spacing: -0.35px; }

/* editor */
.editor { display: flex; flex-direction: column; }
.doc-tabs { height: 23px; display: flex; }
.dt { height: 22px; margin-top: 1px; display: flex; align-items: center; gap: 4px; padding: 0 0 3px 5px; }
.dt.on { background: #585858; border-radius: 3px 3px 0 0; }
.d1 { width: 82px; letter-spacing: -0.55px; }
.d2 { width: 150px; letter-spacing: -0.35px; }
.d3 { width: 153px; gap: 3px; letter-spacing: -0.37px; }
.d4 { width: 163px; padding-left: 6px; gap: 3px; letter-spacing: -0.24px; }
.d5 { width: 158px; padding-left: 7px; gap: 3px; letter-spacing: -0.52px; }
.d6 { width: 200px; padding-left: 6px; letter-spacing: -0.5px; }
.dt .dd { width: 8px; height: 5px; margin-left: 3px; }
.viewport { height: 564px; position: relative; background: linear-gradient(#fff, #dedede); }
.scene { width: 986px; height: 563px; }
.hud {
  position: absolute;
  left: 0;
  top: 0;
  width: 191px;
  height: 65px;
  padding: 6px 0 0 5px;
  border: 1px solid #3a4650;
  border-width: 0 2px 2px 1px;
  background: linear-gradient(#484b4e, #4d7691);
  color: #dedcb4;
  font: bold 12px/14px "Liberation Sans", Arial, sans-serif;
  letter-spacing: 0;
}
.coords { display: grid; grid-template-columns: 17px 63px 26px 52px 20px; }
.coords span { letter-spacing: 0.05px; }
.layer-name { color: #ff0; font-size: 15px; line-height: 16px; }
.snap { font-size: 10px; line-height: 13px; letter-spacing: 0.16px; }
.active-bar {
  position: absolute;
  left: 305px;
  top: 3px;
  width: 375px;
  height: 26px;
  padding: 0 3px;
  display: grid;
  grid-template-columns: repeat(14, 1fr);
  background: #414141;
  border-radius: 2px;
}
.active-bar div { display: grid; place-items: center; position: relative; }
.active-bar svg { width: 15px; height: 15px; }
.active-bar .more::after { content: ""; position: absolute; right: 0; bottom: 2px; border-left: 5px solid transparent; border-bottom: 5px solid #eee; }
.active-bar .sep { border-right: 1px solid #353535; }
.active-bar .letter { font: bold 18px/18px "Liberation Serif", serif; color: #6d6d6d; }

.layer-tabs { height: 22px; display: flex; padding-left: 4px; letter-spacing: -0.4px; margin-top: -1px; }
.ls { display: flex; margin: 4px 5px 0 0; height: 12px; }
.ls i { width: 23px; background: #f00; }
.ls span { width: 18px; background: #4a4a4a; line-height: 12px; text-align: center; }
.lt { height: 18px; display: flex; gap: 6px; padding-left: 5px; background: #393939; border: 1px solid #2d2d2d; border-top: 0; }
.lt span { line-height: 19px; }
.lt i { flex: none; width: 10px; height: 10px; margin-top: 4px; border: 1px solid #a5a5a5; }
.lt.on { background: #525252; border-color: #525252; font-weight: bold; color: #fff; letter-spacing: -0.5px; }
.a { width: 91px; margin-right: 1px; padding-left: 4px; } .b { width: 104px; padding-left: 4px; } .c { width: 85px; padding-left: 4px; } .d { width: 102px; padding-left: 4px; } .e { width: 81px; padding-left: 4px; } .f { width: 93px; padding-left: 3px; }
.c1 { background: #f00; } .c2 { background: #00f; } .c3 { background: #ff0; } .c4 { background: #808000; } .c5 { background: #800080; } .c6 { background: #f0f; }

.dock { display: flex; flex-direction: column; gap: 6px; padding: 1px 0 0 6px; background: #383838; letter-spacing: -0.3px; }
.dock span { writing-mode: vertical-rl; width: 17px; line-height: 16px; background: #505050; border: 1px solid #2b2b2b; text-align: center; }
.k1 { height: 67px; } .k2 { height: 130px; } .k3 { height: 58px; }

/* status */
.status { height: 22px; flex: none; display: flex; align-items: center; padding: 0 0 1px 5px; background: #404040; border-top: 1px solid #393939; }
.s1 { width: 142px; letter-spacing: -0.58px; } .s2 { width: 85px; letter-spacing: -0.4px; } .s3 { width: 94px; letter-spacing: -0.3px; }
.status i { width: 1px; height: 16px; background: #2c2c2c; }
.status .s4 { margin-right: 325px; }
.status b { margin: 2px 4px 0 auto; width: 41px; height: 17px; line-height: 15px; font-weight: normal; letter-spacing: -0.4px; text-align: center; color: #fff; background: #4b4b4b; border: 1px solid #2a2a2a; border-radius: 2px; }

/* taskbar */
.taskbar { height: 38px; flex: none; display: flex; align-items: center; background: linear-gradient(90deg, #0d4a63 0, #0c4a64 30%, #06405f 62%, #06355f 80%, #07335c); }
.tk { width: 46px; height: 38px; display: grid; place-items: center; }
.tk.n { width: 45px; }
.gear-slot { margin-left: 2px; }
.g17 { width: 18px; height: 18px; color: #fff; --hole: #0d4a63; }
.alt { width: 16px; height: 22px; }
.run { background: linear-gradient(#9bd7f3, #9bd7f3) center bottom / 38px 2px no-repeat; }
.active { background: #1b6d96; border-bottom: 2px solid #9bd7f3; }
.tray { margin-left: auto; display: flex; align-items: center; gap: 8px; padding-right: 10px; }
.tray .wifi { margin-left: 2px; }
.clock { width: 56px; display: flex; flex-direction: column; align-items: center; line-height: 17px; color: #fff; letter-spacing: -0.35px; }
.note { width: 27px; margin-left: 15px; position: relative; }
.note em { position: absolute; left: 7px; top: 7px; width: 15px; height: 15px; border-radius: 50%; background: #12618b; border: 1px solid #5d92b0; color: #fff; font-style: normal; line-height: 13px; text-align: center; }
.peek { width: 1px; height: 38px; background: #4e6d89; margin: 0 4px 0 7px; }
```
